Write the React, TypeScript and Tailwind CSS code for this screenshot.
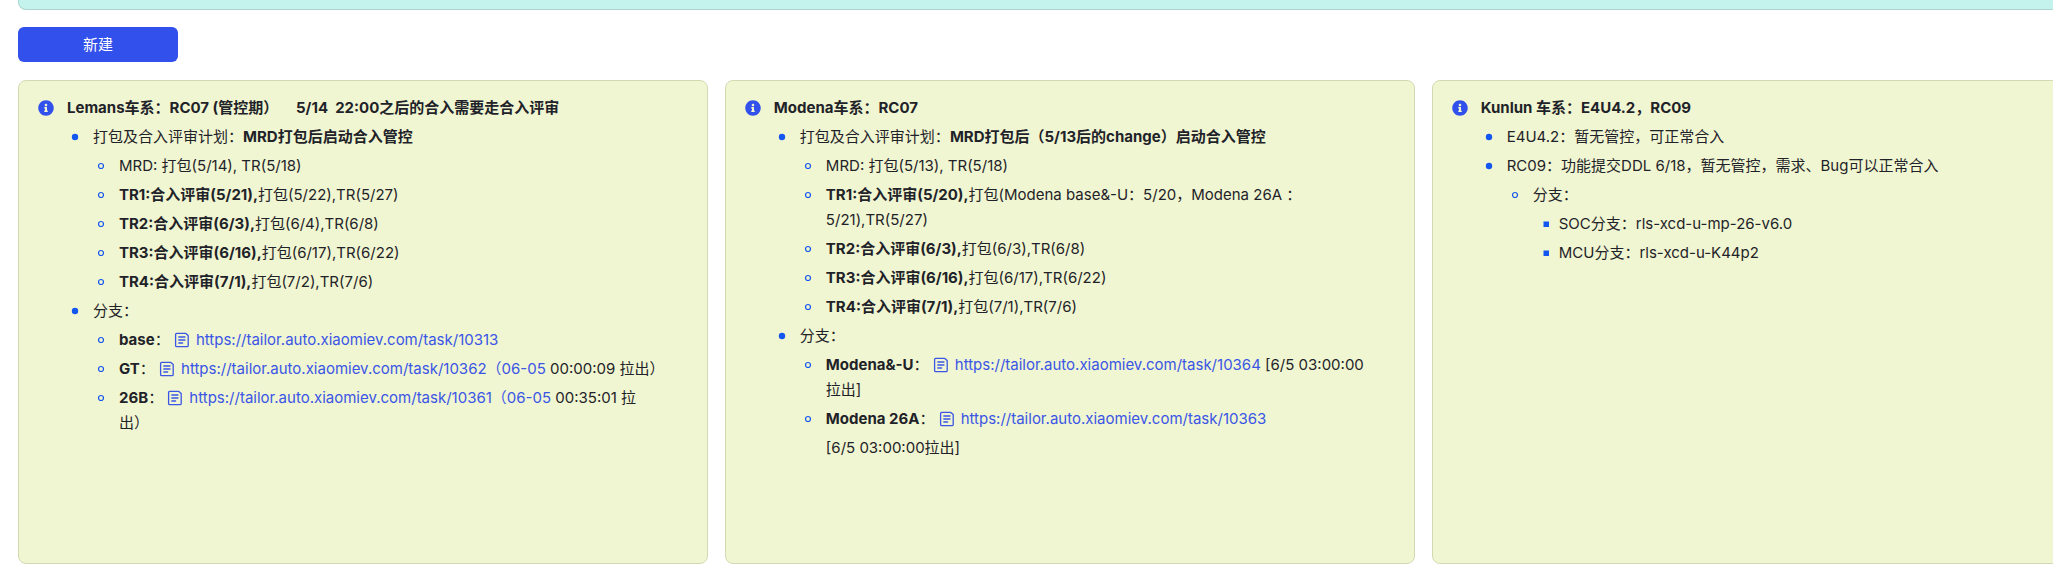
import { FaInfoCircle } from "react-icons/fa";
import type { ReactNode } from "react";

type Item = {
  text: ReactNode;
  extra?: string;
  children?: Item[];
};

type Card = {
  title: string;
  items: Item[];
};

const DocIcon = () => (
  <svg
    viewBox="0 0 16 16"
    className="mr-1.5 inline-block size-4 align-[-3px]"
    fill="none"
    stroke="currentColor"
    strokeWidth="1.3"
    strokeLinecap="round"
    strokeLinejoin="round"
  >
    <path d="M2.6 1.4h9.2l2.4 2.2v9.8a1.2 1.2 0 0 1-1.2 1.2H2.8a1.2 1.2 0 0 1-1.2-1.2V2.4a1 1 0 0 1 1-1z" />
    <path d="M4.8 5h6.2M4.8 8h6.2M4.8 11h3.8" />
  </svg>
);

const TaskLink = ({ id, suffix = "" }: { id: number; suffix?: string }) => (
  <a href={`https://tailor.auto.xiaomiev.com/task/${id}`} className="text-[#3b55e6]">
    <DocIcon />
    https://tailor.auto.xiaomiev.com/task/{id}{suffix}
  </a>
);

// review rounds share the same shape
const round = (name: string, review: string, rest: ReactNode): Item => ({
  text: <><b>{name}:合入评审({review}),</b>{rest}</>,
});

const cards: Card[] = [
  {
    title: "Lemans车系：RC07 (管控期）\u00a0\u00a0\u00a0\u00a0 5/14\u00a0 22:00之后的合入需要走合入评审",
    items: [
      {
        text: <>打包及合入评审计划：<b>MRD打包后启动合入管控</b></>,
        children: [
          { text: "MRD: 打包(5/14), TR(5/18)" },
          round("TR1", "5/21", "打包(5/22),TR(5/27)"),
          round("TR2", "6/3", "打包(6/4),TR(6/8)"),
          round("TR3", "6/16", "打包(6/17),TR(6/22)"),
          round("TR4", "7/1", "打包(7/2),TR(7/6)"),
        ],
      },
      {
        text: "分支：",
        children: [
          { text: <><b>base</b>： <TaskLink id={10313} /></> },
          { text: <><b>GT</b>： <TaskLink id={10362} suffix="（06-05" /> 00:00:09 拉出）</> },
          { text: <><b>26B</b>： <TaskLink id={10361} suffix="（06-05" /> 00:35:01 拉<br />出）</> },
        ],
      },
    ],
  },
  {
    title: "Modena车系：RC07",
    items: [
      {
        text: <>打包及合入评审计划：<b>MRD打包后（5/13后的change）启动合入管控</b></>,
        children: [
          { text: "MRD: 打包(5/13), TR(5/18)" },
          round("TR1", "5/20", <>打包(Modena base&-U：5/20，Modena 26A ：<br />5/21),TR(5/27)</>),
          round("TR2", "6/3", "打包(6/3),TR(6/8)"),
          round("TR3", "6/16", "打包(6/17),TR(6/22)"),
          round("TR4", "7/1", "打包(7/1),TR(7/6)"),
        ],
      },
      {
        text: "分支：",
        children: [
          { text: <><b>Modena&-U</b>： <TaskLink id={10364} /> [6/5 03:00:00<br />拉出]</> },
          { text: <><b>Modena 26A</b>： <TaskLink id={10363} /></>, extra: "[6/5 03:00:00拉出]" },
        ],
      },
    ],
  },
  {
    title: "Kunlun 车系：E4U4.2，RC09",
    items: [
      { text: "E4U4.2：暂无管控，可正常合入" },
      {
        text: "RC09：功能提交DDL 6/18，暂无管控，需求、Bug可以正常合入",
        children: [
          {
            text: "分支：",
            children: [
              { text: "SOC分支：rls-xcd-u-mp-26-v6.0" },
              { text: "MCU分支：rls-xcd-u-K44p2" },
            ],
          },
        ],
      },
    ],
  },
];

// disc, ring, square
const Marker = ({ level }: { level: number }) => (
  <svg viewBox="0 0 8 8" className="size-2 text-[#1456f0]" aria-hidden="true">
    {level === 0 && <circle cx="4" cy="4" r="3.2" fill="currentColor" />}
    {level === 1 && <circle cx="4" cy="4" r="2.5" fill="none" stroke="currentColor" strokeWidth="1.2" />}
    {level === 2 && <rect x="2.5" y="1.5" width="5.5" height="5.5" fill="currentColor" />}
  </svg>
);

const List = ({ items, level = 0 }: { items: Item[]; level?: number }) => (
  <ul className="mt-1 flex flex-col gap-1">
    {items.map((item, i) => (
      <li key={i} className="flex">
        <span className={`flex h-[25px] w-[26px] shrink-0 items-center ${level === 2 ? "pl-2" : "pl-1"}`}>
          <Marker level={level} />
        </span>
        <div className="min-w-0 flex-1">
          <p>{item.text}</p>
          {item.extra && <p className="mt-1">{item.extra}</p>}
          {item.children && <List items={item.children} level={level + 1} />}
        </div>
      </li>
    ))}
  </ul>
);

const App = () => {
  return (
    <div className="overflow-hidden bg-white pl-[18px] font-['Inter','Noto_Sans_CJK_SC',sans-serif] text-[15px] leading-[25px] text-[#1f2329]">
      {/* bottom edge of the banner above */}
      <div className="-mr-4 h-2.5 rounded-b-lg border border-t-0 border-[#a9d4cf] bg-[#c4f2ec]" />

      <button type="button" className="mt-[17px] flex h-[35px] w-40 items-center justify-center rounded-md bg-[#3250eb] text-white">
        新建
      </button>

      <div className="mt-[18px] flex gap-[17px]">
        {cards.map((card) => (
          <section
            key={card.title}
            className="flex min-h-[484px] w-[33.9%] shrink-0 gap-[13px] rounded-lg border border-[#d2dab2] bg-[#f0f6d1] py-3.5 pr-7 pl-[19px]"
          >
            <FaInfoCircle className="mt-[5px] size-4 shrink-0 text-[#3250eb]" />
            <div className="min-w-0 flex-1">
              <h2 className="font-bold">{card.title}</h2>
              <List items={card.items} />
            </div>
          </section>
        ))}
      </div>
    </div>
  );
};

export default App;
